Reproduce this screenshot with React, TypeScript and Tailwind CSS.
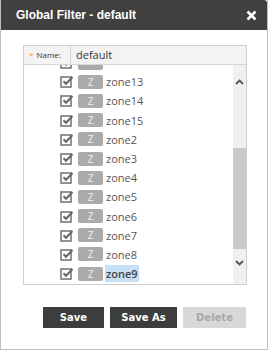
import React from 'react';

const zones = ['zone12', 'zone13', 'zone14', 'zone15', 'zone2', 'zone3', 'zone4', 'zone5', 'zone6', 'zone7', 'zone8', 'zone9'];

const CheckBox: React.FC = () => (
  <svg width="14" height="13" viewBox="0 0 14 13" className="shrink-0">
    <rect x="1" y="2" width="10" height="10" fill="#fff" stroke="#787878" strokeWidth="1.6" />
    <path d="M3.5 6.3 L6 8.8 L12.5 2" fill="none" stroke="#666" strokeWidth="2" />
  </svg>
);

// the first row is scrolled mostly out of view, so only its bottom edge shows
const ZoneRow: React.FC<{ name: string; selected: boolean; cut?: boolean }> = ({ name, selected, cut }) => (
  <div className="h-[19.2px] flex items-center pl-[36px]">
    <CheckBox />
    <div className="ml-[4px] w-[25px] h-[14px] shrink-0 rounded-[2px] bg-[#aaaaaa] text-[#eeeeee] text-[10px] leading-[14px] text-center">
      {cut ? '' : 'Z'}
    </div>
    {!cut && (
      <span
        className={
          'ml-[2px] px-[1px] text-[11px] leading-[17px] ' +
          (selected ? 'bg-[#c6e0f5] text-[#444] font-semibold' : 'text-[#555]')
        }
      >
        {name}
      </span>
    )}
  </div>
);

export default function App() {
  return (
    <div
      className="w-[268px] h-[350px] bg-white flex flex-col border-x border-b border-[#bdbdbd] overflow-hidden"
      style={{ fontFamily: '"Open Sans", "DejaVu Sans", sans-serif' }}
    >
      <div className="h-[30px] shrink-0 bg-[#404040] rounded-tr-[3px] flex items-center justify-between pl-[15px] pr-[10px]">
        <span className="text-white text-[12px] font-bold" style={{ fontFamily: '"Liberation Sans", Arial, sans-serif' }}>
          Global Filter - default
        </span>
        <svg width="11" height="11" viewBox="0 0 11 11">
          <path d="M1.5 1.5 L9.5 9.5 M9.5 1.5 L1.5 9.5" stroke="#fff" strokeWidth="2.6" />
        </svg>
      </div>

      <div className="mt-[15px] ml-[22px] w-[224px] h-[240px] border border-[#cfcfcf] flex flex-col">
        <div className="h-[19px] shrink-0 flex bg-[#f3f3f3] border-b border-[#d6d6d6]">
          <div className="w-[47px] border-r border-[#d6d6d6] flex items-center pl-[5px] text-[8px] text-[#333]">
            <span className="text-[#f7931e] mr-[3px]">*</span>Name:
          </div>
          <div className="flex items-center pl-[5px] text-[11px] text-[#333]">default</div>
        </div>
        <div className="flex-1 flex min-h-0">
          <div className="flex-1 overflow-hidden">
            <div className="mt-[-12px]">
              {zones.map((z, i) => (
                <ZoneRow key={z} name={z} selected={z === 'zone9'} cut={i === 0} />
              ))}
            </div>
          </div>
          <div className="w-[13px] bg-[#f0f0f0] flex flex-col items-center">
            <svg width="9" height="6" viewBox="0 0 9 6" className="mt-[14px]">
              <path d="M1 5 L4.5 1.5 L8 5" fill="none" stroke="#555" strokeWidth="1.8" />
            </svg>
            <div className="mt-[63px] w-full h-[101px] bg-[#c9c9c9]" />
            <svg width="9" height="6" viewBox="0 0 9 6" className="mt-[11px]">
              <path d="M1 1 L4.5 4.5 L8 1" fill="none" stroke="#555" strokeWidth="1.8" />
            </svg>
          </div>
        </div>
      </div>

      <div
        className="mt-[22px] ml-[42px] flex gap-[6px]"
        style={{ fontFamily: '"DejaVu Sans", Verdana, sans-serif' }}
      >
        <button className="w-[61px] h-[21px] bg-[#3d3d3d] text-white text-[10px] font-bold">Save</button>
        <button className="w-[67px] h-[21px] bg-[#3d3d3d] text-white text-[10px] font-bold">Save As</button>
        <button className="w-[63px] h-[21px] bg-[#d8d8d8] text-[#a8a8a8] text-[10px] font-bold" disabled>
          Delete
        </button>
      </div>
    </div>
  );
}
